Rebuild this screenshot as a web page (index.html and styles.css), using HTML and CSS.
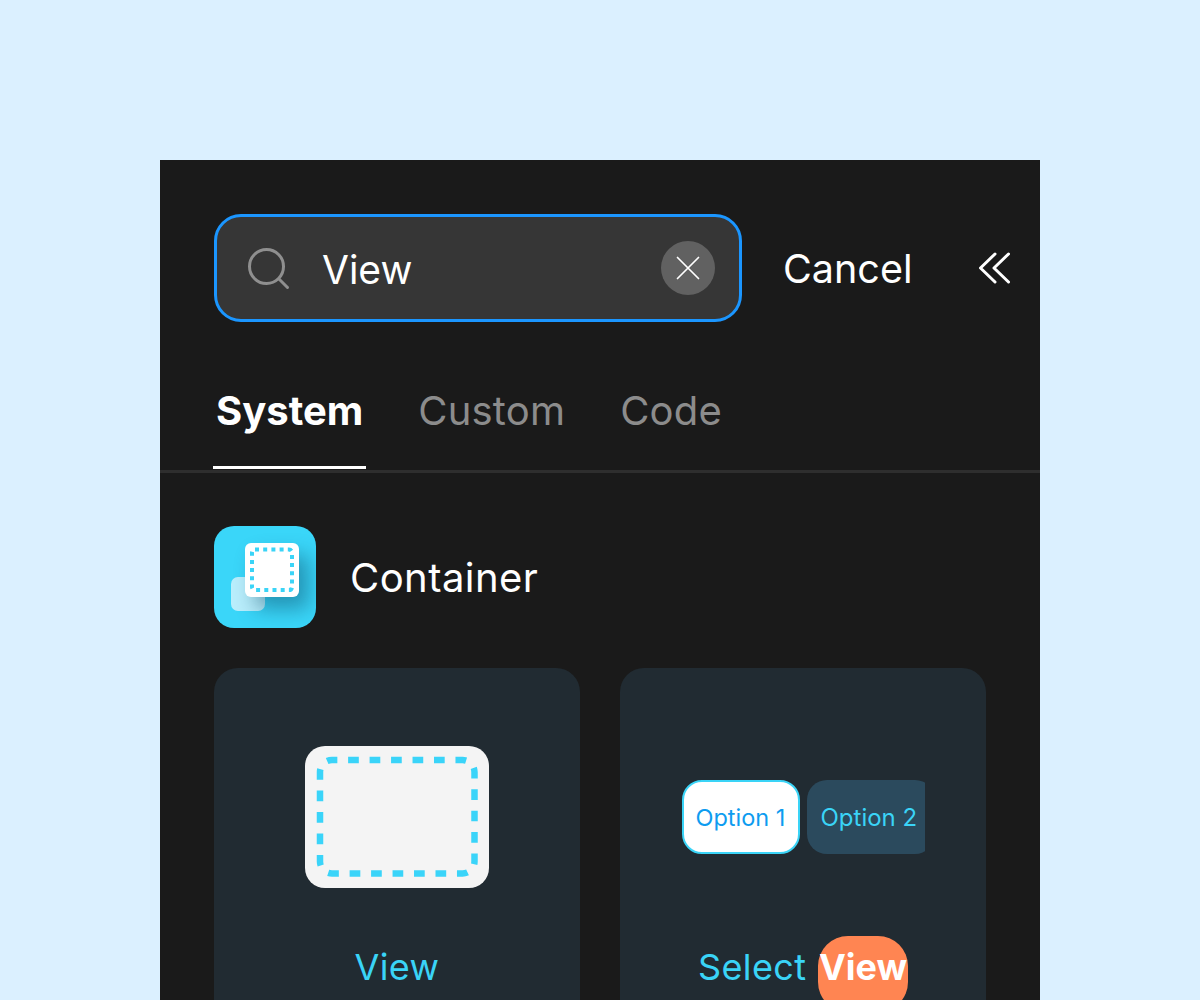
FILE: index.html
```html
<!DOCTYPE html>
<html>
<head>
	<title>Component search</title>
	<link rel="stylesheet" href="styles.css">
</head>
<body>
	<div class="panel">
		<div class="search-row">
			<div class="search-box">
				<svg class="search-icon" width="44" height="44" viewBox="0 0 44 44" fill="none" stroke="#8f8f8f" stroke-width="3" stroke-linecap="round">
					<circle cx="18.5" cy="20.5" r="17"/>
					<path d="M31 33L39.5 41.5"/>
				</svg>
				<span class="search-text">View</span>
				<div class="clear-btn">
					<svg width="24" height="24" viewBox="0 0 24 24" fill="none" stroke="#fff" stroke-width="1.7" stroke-linecap="round">
						<path d="M1.5 1.5L22.5 22.5M22.5 1.5L1.5 22.5"/>
					</svg>
				</div>
			</div>
			<span class="cancel">Cancel</span>
			<svg class="collapse" width="32" height="32" viewBox="0 0 32 32" fill="none" stroke="#fff" stroke-width="3" stroke-linecap="round" stroke-linejoin="round">
				<path d="M17 2L2.5 16L17 30M30.5 2L16 16L30.5 30"/>
			</svg>
		</div>

		<div class="tabs">
			<div class="tab active">System</div>
			<div class="tab">Custom</div>
			<div class="tab">Code</div>
		</div>

		<div class="section">
			<div class="section-head">
				<div class="app-icon">
					<div class="back-square"></div>
					<div class="front-square">
						<svg width="54" height="54" viewBox="0 0 54 54" fill="none">
							<rect x="7" y="6.5" width="40" height="40.5" rx="3" stroke="#3ad4f7" stroke-width="4" stroke-dasharray="4 4.2"/>
						</svg>
					</div>
				</div>
				<span class="section-title">Container</span>
			</div>
			<div class="cards">
				<div class="card">
					<div class="preview">
						<div class="view-box">
							<svg width="184" height="142" viewBox="0 0 184 142" fill="none">
								<rect x="15" y="14" width="154.5" height="113.5" rx="12" stroke="#3ad4f9" stroke-width="6.5" stroke-dasharray="10.7 10.77" stroke-dashoffset="5.35"/>
							</svg>
						</div>
					</div>
					<div class="card-label">View</div>
				</div>
				<div class="card">
					<div class="preview">
						<div class="options">
							<div class="option selected">Option 1</div>
							<div class="option">Option 2</div>
						</div>
					</div>
					<div class="card-label">Select <span class="highlight">View</span></div>
				</div>
			</div>
		</div>
	</div>
</body>
</html>
```

FILE: styles.css
```css
html, body {
	margin: 0;
	height: 1000px;
	overflow: hidden;
}
body {
	background-color: #dbf0ff;
	font-family: "Inter", "Liberation Sans", sans-serif;
	padding-top: 160px;
	box-sizing: border-box;
}
.panel {
	width: 880px;
	height: 840px;
	margin: 0 auto;
	background-color: #1a1a1a;
	overflow: hidden;
}
.search-row {
	display: flex;
	align-items: center;
	padding: 54px 30px 0 54px;
}
.search-box {
	display: flex;
	align-items: center;
	box-sizing: border-box;
	width: 528px;
	height: 108px;
	padding: 0 24px 0 31px;
	background-color: #363636;
	border: 3px solid #1b96ff;
	border-radius: 27px;
}
.search-icon {
	flex: none;
}
.search-text {
	flex: 1;
	margin: 2px 0 0 30px;
	font-size: 39px;
	color: #fff;
}
.clear-btn {
	display: flex;
	align-items: center;
	justify-content: center;
	width: 54px;
	height: 54px;
	background-color: #616161;
	border-radius: 50%;
}
.cancel {
	margin: 2px 0 0 41px;
	font-size: 39.5px;
	color: #fff;
}
.collapse {
	margin-left: auto;
}
.tabs {
	display: flex;
	gap: 49px;
	height: 148px;
	padding-left: 53px;
	border-bottom: 3px solid #2e2e2e;
}
.tab {
	box-sizing: border-box;
	height: 147px;
	padding: 65px 3px 0;
	font-size: 40px;
	line-height: 48px;
	letter-spacing: 0.2px;
	color: #8c8c8c;
}
.tab.active {
	font-weight: 700;
	letter-spacing: 0;
	color: #fff;
	border-bottom: 3px solid #fff;
}
.section {
	padding: 53px 54px 0;
}
.section-head {
	display: flex;
	align-items: center;
	gap: 34px;
}
.app-icon {
	position: relative;
	width: 102px;
	height: 102px;
	border-radius: 20px;
	overflow: hidden;
	background-color: #3ad6f9;
}
.back-square {
	position: absolute;
	left: 17px;
	top: 51px;
	width: 34px;
	height: 34px;
	border-radius: 7px;
	background-color: #b9eefc;
}
.front-square {
	position: absolute;
	left: 31px;
	top: 17px;
	width: 54px;
	height: 54px;
	border-radius: 6px;
	background-color: #fff;
	box-shadow: 10px 12px 20px rgba(10, 70, 100, 0.45);
}
.front-square svg {
	display: block;
}
.section-title {
	font-size: 40px;
	letter-spacing: 0.45px;
	color: #fff;
}
.cards {
	display: flex;
	gap: 40px;
	margin-top: 40px;
}
.card {
	width: 366px;
	height: 400px;
	background-color: #212b32;
	border-radius: 24px;
	text-align: center;
}
.preview {
	display: flex;
	justify-content: center;
	align-items: center;
	height: 298px;
}
.view-box {
	width: 184px;
	height: 142px;
	background-color: #f4f4f4;
	border-radius: 20px;
}
.view-box svg {
	display: block;
}
.options {
	display: flex;
	gap: 7px;
	width: 243px;
	overflow: hidden;
}
.option {
	flex: none;
	box-sizing: border-box;
	width: 128px;
	height: 74px;
	padding-left: 14px;
	line-height: 76px;
	text-align: left;
	background-color: #2b4a5d;
	border-radius: 20px;
	font-size: 24px;
	color: #3ad4f7;
}
.option.selected {
	width: 118px;
	padding-left: 12px;
	line-height: 72px;
	background-color: #fff;
	border: 2px solid #3ad4f7;
	font-size: 23.5px;
	color: #0d9cf0;
}
.card-label {
	margin-top: -29px;
	font-size: 36px;
	line-height: 60px;
	letter-spacing: 0.4px;
	color: #3ad4f7;
}
.highlight {
	display: inline-block;
	width: 90px;
	margin: -1px 0 0 1px;
	padding-bottom: 14px;
	line-height: 62px;
	letter-spacing: 0;
	background-color: #ff8552;
	border-radius: 30px;
	font-weight: 700;
	color: #fff;
}
```
